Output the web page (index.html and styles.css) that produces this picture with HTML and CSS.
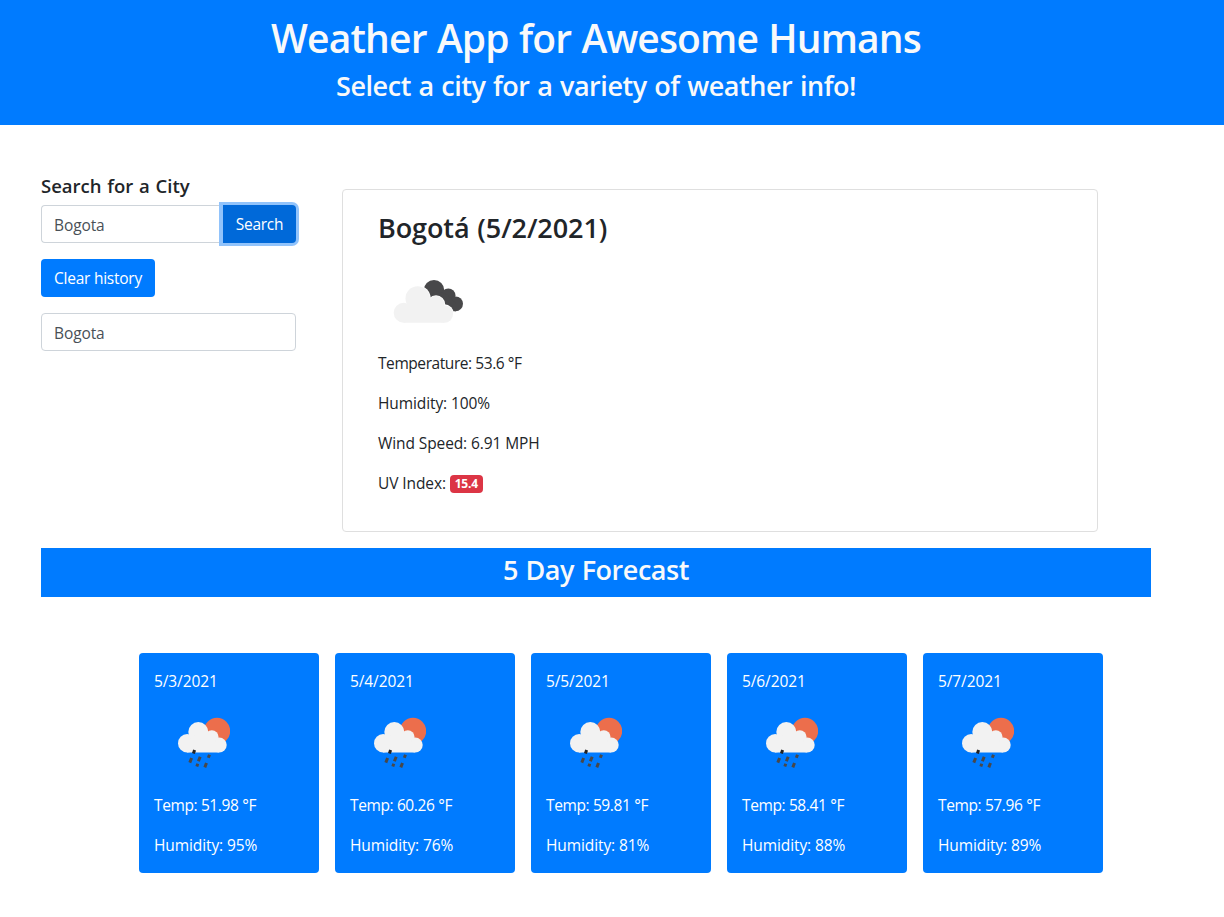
FILE: index.html
```html
<!DOCTYPE html>
<html lang="en">
<head>
<meta charset="utf-8">
<title>Weather App</title>
<link rel="stylesheet" href="styles.css">
</head>
<body>
<svg class="symbols" aria-hidden="true">
  <symbol id="rain" viewBox="0 0 52 51">
    <circle cx="39" cy="14" r="13.200" fill="#ec6e4c"/>
    <g fill="#f2f2f2">
      <circle cx="9.200" cy="26.300" r="9.200"/>
      <circle cx="20.300" cy="15" r="10"/>
      <circle cx="33.800" cy="20" r="6.800"/>
      <circle cx="41.200" cy="28" r="7.500"/>
      <path d="M9 35.500V25l11-10 14 5 7 8v7.500z"/>
    </g>
    <g stroke="#48484a" stroke-width="3">
      <path d="M16.600 33l-1.200 3.500" stroke="#222"/>
      <path d="M13.600 41l-1.800 4.600M22.200 39.700l-1.800 4.600M31.500 37.800l-1.200 3M19.800 46.800l-1 2.700M28.500 46l-1.700 4.400"/>
    </g>
  </symbol>
</svg>
<header class="banner">
  <h1 class="banner-title">Weather App for Awesome Humans</h1>
  <h2 class="banner-sub">Select a city for a variety of weather info!</h2>
</header>
<main class="page">
  <div class="top">
    <aside class="sidebar">
      <h3 class="label">Search for a City</h3>
      <div class="group">
        <div class="field field-joined">Bogota</div>
        <button class="btn btn-focus">Search</button>
      </div>
      <button class="btn btn-clear">Clear history</button>
      <div class="field">Bogota</div>
    </aside>
    <section class="current">
      <h2 class="city">Bogotá (5/2/2021)</h2>
      <svg class="clouds" viewBox="0 0 100 100">
        <g fill="#48484a">
          <circle cx="56" cy="39.300" r="10.300"/>
          <circle cx="70.300" cy="44.600" r="7.200"/>
          <circle cx="77.600" cy="52.800" r="7.400"/>
          <path d="M56 39l14 5 8 9v7.200h-6L52 52z"/>
        </g>
        <g fill="#fff">
          <circle cx="39.700" cy="47.500" r="13"/>
          <circle cx="58" cy="53.500" r="9.200"/>
          <circle cx="66.300" cy="63" r="9.700"/>
        </g>
        <g fill="#f2f2f2">
          <circle cx="25.700" cy="61.700" r="10"/>
          <circle cx="39.700" cy="47.500" r="12.200"/>
          <circle cx="58" cy="53.500" r="8.400"/>
          <circle cx="66.300" cy="63" r="8.800"/>
          <path d="M25.700 71.700V61l14-14L58 53l8 9v9.700z"/>
        </g>
      </svg>
      <p class="line temp">Temperature: 53.6 °F</p>
      <p class="line">Humidity: 100%</p>
      <p class="line">Wind Speed: 6.91 MPH</p>
      <p class="line">UV Index: <span class="badge">15.4</span></p>
    </section>
  </div>
  <h2 class="forecast-title">5 Day Forecast</h2>
  <div class="days">
    <article class="day"><p>5/3/2021</p><svg class="rain"><use href="#rain"/></svg><p class="high">Temp: 51.98 °F</p><p>Humidity: 95%</p></article>
    <article class="day"><p>5/4/2021</p><svg class="rain"><use href="#rain"/></svg><p class="high">Temp: 60.26 °F</p><p>Humidity: 76%</p></article>
    <article class="day"><p>5/5/2021</p><svg class="rain"><use href="#rain"/></svg><p class="high">Temp: 59.81 °F</p><p>Humidity: 81%</p></article>
    <article class="day"><p>5/6/2021</p><svg class="rain"><use href="#rain"/></svg><p class="high">Temp: 58.41 °F</p><p>Humidity: 88%</p></article>
    <article class="day"><p>5/7/2021</p><svg class="rain"><use href="#rain"/></svg><p class="high">Temp: 57.96 °F</p><p>Humidity: 89%</p></article>
  </div>
</main>
</body>
</html>
```
FILE: styles.css
```css
* { box-sizing: border-box; }
body { margin: 0; background: #fff; color: #212529; font: 400 15.500px/24px "Open Sans", "Noto Sans", sans-serif; letter-spacing: -0.100px; }
h1, h2, h3, p { margin: 0; font-weight: 600; }
p { font-weight: 400; }
.symbols { display: none; }
.banner { height: 125px; padding: 14px 32px 0 0; background: #007bff; color: #f8f9fa; text-align: center; }
.banner-title { font-size: 39px; line-height: 48px; letter-spacing: -0.850px; word-spacing: 1px; }
.banner-sub { margin-top: 7px; font-size: 27px; line-height: 34px; letter-spacing: -0.450px; word-spacing: 1px; }
.page { padding: 50px 73px 0 41px; }
.top { display: flex; align-items: flex-start; }
.sidebar { width: 255px; }
.label { height: 30px; font-size: 18.500px; line-height: 22px; letter-spacing: 0; word-spacing: 1px; }
.group { display: flex; margin-bottom: 16px; }
.field { height: 38px; padding: 7px 12px 5px; border: 1px solid #ced4da; border-radius: 4px; color: #495057; }
.field-joined { flex: 1; border-right: 0; border-radius: 4px 0 0 4px; }
.btn { display: block; height: 38px; padding: 0; border: 0; border-radius: 4px; background: #007bff; color: #fff; font: inherit; letter-spacing: -0.250px; text-align: center; }
.btn-focus { width: 74px; border-radius: 0 4px 4px 0; border-left: 1px solid #91c3fb; background: #0069d9; background-clip: padding-box; box-shadow: 0 0 0 3px #91c3fb; }
.btn-clear { width: 114px; margin-bottom: 16px; }
.current { width: 756px; height: 343px; margin: 14px 0 0 46px; padding: 21px 35px; border: 1px solid #dfdfdf; border-radius: 4px; }
.city { font-size: 27px; line-height: 34px; letter-spacing: -0.100px; word-spacing: 1px; }
.clouds { display: block; width: 100px; height: 100px; margin-top: 6px; }
.line { margin-bottom: 16px; }
.temp { letter-spacing: -0.430px; }
.badge { display: inline-block; width: 33px; height: 18px; border-radius: 4px; background: #dc3545; color: #fff; font-size: 12px; font-weight: 700; line-height: 18px; letter-spacing: -0.200px; text-align: center; vertical-align: 1px; }
.forecast-title { height: 49px; margin-top: 16px; padding-top: 5px; background: #007bff; color: #f8f9fa; font-size: 27px; line-height: 34px; letter-spacing: -0.450px; word-spacing: 1px; text-align: center; }
.days { display: flex; gap: 16px; margin: 56px 0 0 98px; }
.day { flex: 0 0 180px; height: 220px; padding: 16px 15px; border-radius: 4px; background: #007bff; color: #fff; }
.day p + p { margin-top: 16px; }
.high { letter-spacing: -0.380px; }
.rain { display: block; width: 52px; height: 51px; margin: 24px 0 25px 24px; }
```
